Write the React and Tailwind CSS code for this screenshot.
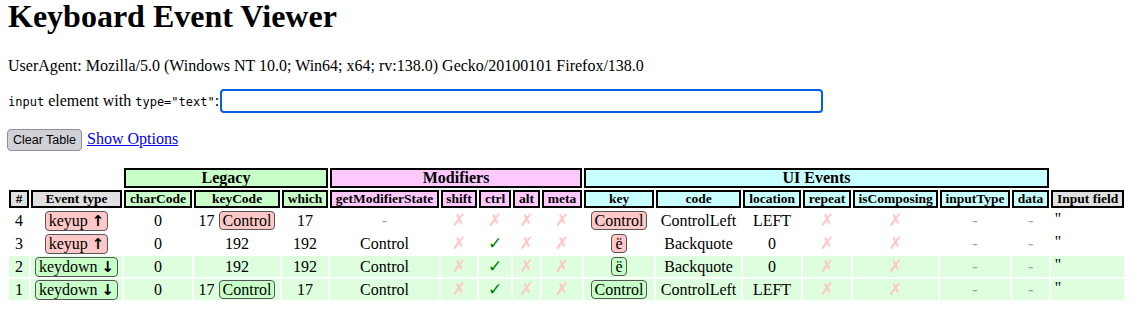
const COLS = [
  { name: "#", w: "w-[20px]", bg: "bg-[#e0e0e0]" },
  { name: "Event type", w: "w-[91px]", bg: "bg-[#e0e0e0]" },
  { name: "charCode", w: "w-[68px]", bg: "bg-[#c8ffc8]" },
  { name: "keyCode", w: "w-[86px]", bg: "bg-[#c8ffc8]" },
  { name: "which", w: "w-[46px]", bg: "bg-[#c8ffc8]" },
  { name: "getModifierState", w: "w-[109px]", bg: "bg-[#ffc8ff]" },
  { name: "shift", w: "w-[36px]", bg: "bg-[#ffc8ff]" },
  { name: "ctrl", w: "w-[32px]", bg: "bg-[#ffc8ff]" },
  { name: "alt", w: "w-[27px]", bg: "bg-[#ffc8ff]" },
  { name: "meta", w: "w-[40px]", bg: "bg-[#ffc8ff]" },
  { name: "key", w: "w-[70px]", bg: "bg-[#c8ffff]" },
  { name: "code", w: "w-[85px]", bg: "bg-[#c8ffff]" },
  { name: "location", w: "w-[58px]", bg: "bg-[#c8ffff]" },
  { name: "repeat", w: "w-[48px]", bg: "bg-[#c8ffff]" },
  { name: "isComposing", w: "w-[85px]", bg: "bg-[#c8ffff]" },
  { name: "inputType", w: "w-[70px]", bg: "bg-[#c8ffff]" },
  { name: "data", w: "w-[37px]", bg: "bg-[#c8ffff]" },
  { name: "Input field", w: "w-[73px]", bg: "bg-[#e0e0e0]" },
];

const ROWS = [
  { n: 4, type: "keyup", keyCode: 17, keyCap: true, which: 17, mods: null, ctrl: false, key: "Control", code: "ControlLeft", loc: "LEFT" },
  { n: 3, type: "keyup", keyCode: 192, keyCap: false, which: 192, mods: "Control", ctrl: true, key: "ë", code: "Backquote", loc: "0" },
  { n: 2, type: "keydown", keyCode: 192, keyCap: false, which: 192, mods: "Control", ctrl: true, key: "ë", code: "Backquote", loc: "0" },
  { n: 1, type: "keydown", keyCode: 17, keyCap: true, which: 17, mods: "Control", ctrl: true, key: "Control", code: "ControlLeft", loc: "LEFT" },
];

// keycap style label
function Cap({ down, children }) {
  return (
    <span
      className={
        "inline-block border border-[#555] rounded-[4px] px-[3px] leading-[17px] " +
        (down ? "bg-[#c8ffc8]" : "bg-[#ffc8c8]")
      }
    >
      {children}
    </span>
  );
}

const No = () => <span className="text-[#ffc8c8] font-['DejaVu_Sans',sans-serif] text-[17px]">✗</span>;
const Yes = () => <span className="text-[#008000] font-['DejaVu_Sans',sans-serif] text-[17px]">✓</span>;
const Dash = () => <span className="text-[#a0a0a0]">-</span>;

export default function App() {
  return (
    <div className="w-full min-h-[313px] bg-white text-black px-[8px] font-['Liberation_Serif',serif]">
      <h1 className="text-[32px] font-bold leading-[32px]">Keyboard Event Viewer</h1>

      <p className="mt-[25px] text-[16px] leading-[18px]">
        UserAgent: Mozilla/5.0 (Windows NT 10.0; Win64; x64; rv:138.0) Gecko/20100101 Firefox/138.0
      </p>

      <div className="mt-[14px] flex items-center">
        <span className="text-[16px] leading-[18px]">
          <code className="font-['DejaVu_Sans_Mono',monospace] text-[12px]">input</code> element with{" "}
          <code className="font-['DejaVu_Sans_Mono',monospace] text-[12px]">type="text"</code>:
        </span>
        <input
          type="text"
          className="ml-[1px] w-[603px] h-[24px] border-2 border-[#0060df] rounded-[4px] outline-none px-1"
        />
      </div>

      <div className="mt-[14px] flex items-baseline">
        <button className="inline-flex items-center h-[22px] px-[5px] border border-[#8f8f9d] rounded-[4px] bg-[#d0d0d7] text-[12.5px] font-['Liberation_Sans',sans-serif] -ml-px">
          Clear Table
        </button>
        <a href="#" className="ml-[5px] text-[16px] text-[#0000ee] underline">
          Show Options
        </a>
      </div>

      <table className="mt-[15px] -ml-px table-fixed border-separate border-spacing-[2px] w-[1119px]">
        <colgroup>
          {COLS.map((c) => (
            <col key={c.name} className={c.w} />
          ))}
        </colgroup>
        <thead>
          <tr>
            <th className="h-[20px]" colSpan={2}></th>
            <th colSpan={3} className="h-[20px] p-0 border-2 border-black bg-[#c8ffc8] text-[16px] font-bold leading-[16px]">
              Legacy
            </th>
            <th colSpan={5} className="h-[20px] p-0 border-2 border-black bg-[#ffc8ff] text-[16px] font-bold leading-[16px]">
              Modifiers
            </th>
            <th colSpan={7} className="h-[20px] p-0 border-2 border-black bg-[#c8ffff] text-[16px] font-bold leading-[16px]">
              UI Events
            </th>
            <th></th>
          </tr>
          <tr>
            {COLS.map((c) => (
              <th
                key={c.name}
                className={"h-[18px] p-0 border-2 border-black text-[13.5px] font-bold leading-[14px] whitespace-nowrap " + c.bg}
              >
                {c.name}
              </th>
            ))}
          </tr>
        </thead>
        <tbody>
          {ROWS.map((r) => {
            const down = r.type === "keydown";
            const td = "h-[21px] p-0 text-center align-middle text-[16px] leading-[18px] whitespace-nowrap " + (down ? "bg-[#ddffdd]" : "");
            return (
              <tr key={r.n}>
                <td className={td}>{r.n}</td>
                <td className={td}>
                  <Cap down={down}>
                    {r.type} <span className="font-['DejaVu_Sans',sans-serif] font-bold text-[15px]">{down ? "↓" : "↑"}</span>
                  </Cap>
                </td>
                <td className={td}>0</td>
                <td className={td}>
                  {r.keyCap ? (
                    <>
                      {r.keyCode} <Cap down={down}>Control</Cap>
                    </>
                  ) : (
                    r.keyCode
                  )}
                </td>
                <td className={td}>{r.which}</td>
                <td className={td}>{r.mods ? r.mods : <Dash />}</td>
                <td className={td}><No /></td>
                <td className={td}>{r.ctrl ? <Yes /> : <No />}</td>
                <td className={td}><No /></td>
                <td className={td}><No /></td>
                <td className={td}>
                  <Cap down={down}>{r.key}</Cap>
                </td>
                <td className={td}>{r.code}</td>
                <td className={td}>{r.loc}</td>
                <td className={td}><No /></td>
                <td className={td}><No /></td>
                <td className={td}><Dash /></td>
                <td className={td}><Dash /></td>
                <td className={"h-[21px] p-0 pl-[4px] text-left align-top text-[16px] leading-[18px] " + (down ? "bg-[#ddffdd]" : "")}>''</td>
              </tr>
            );
          })}
        </tbody>
      </table>
    </div>
  );
}
